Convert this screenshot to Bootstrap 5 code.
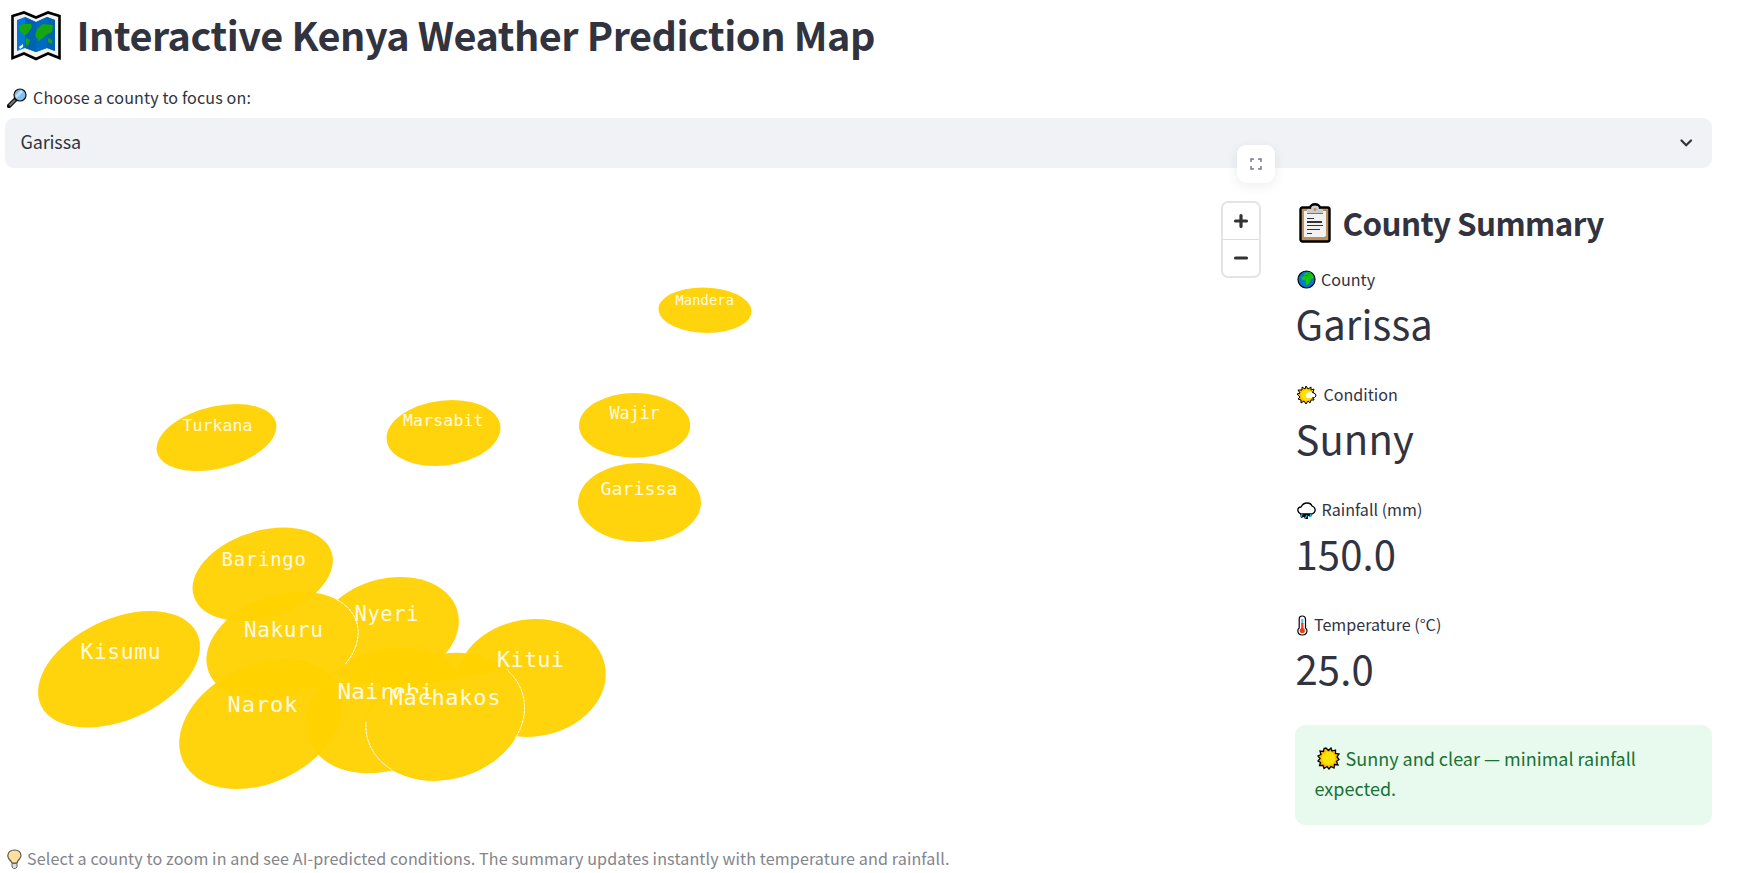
<!DOCTYPE html>
<html lang="en">
<head>
<meta charset="utf-8">
<title>Interactive Kenya Weather Prediction Map</title>
<link href="https://cdn.jsdelivr.net/npm/bootstrap@5.3.0/dist/css/bootstrap.min.css" rel="stylesheet">
<style>
body{font-family:"Noto Sans CJK JP","Noto Sans CJK SC","Open Sans",sans-serif;color:#31333f;background:#fff;overflow:hidden}
svg{flex:none;display:block}
.page{width:1706.5px;margin-left:5px}
.title{font-size:39.6px;line-height:53px;font-weight:700;letter-spacing:-.45px;margin:0;padding-top:7px;height:86px;gap:16px}
.title svg{margin:4px 0 0 5.5px}
.lbl{font-size:16.1px;line-height:22px;height:24px;white-space:nowrap}
.picker{height:50px;background:#f0f2f6;border-radius:9px;font-size:18px;letter-spacing:-.15px;line-height:47px;padding:0 18px 0 15.5px}
.map{width:1265px;height:679px}
.fs-btn{width:38px;height:38px;left:1232px;top:-23px;border-radius:9px;background:#fff;box-shadow:0 3px 12px rgba(49,51,63,.09)}
.zoomer{width:40.5px;height:77px;left:1215.5px;top:33px;border-radius:7px;border:2.3px solid #e4e4e4;background:#fff}
.zoomer div:first-child{border-bottom:1px solid #ddd}
.side{width:417px;padding-top:34px}
.side h2{font-size:31.4px;line-height:40px;font-weight:700;letter-spacing:-.6px;height:66px;margin:0;padding-top:1px}
.metric{height:115px}
.metric:nth-last-child(2){height:112px}
.val{font-size:40px;line-height:56px;letter-spacing:.12px;margin:2.6px 0 0 1px}
.note{height:100px;background:#e8f9ee;color:#177233;border-radius:10px;padding:18px 20px;font-size:18px;line-height:30.4px}
.note svg{display:inline-block;vertical-align:-4px;margin:0 2px 0 2px}
.focus-label{letter-spacing:.12px}
.foot{color:#83858c;letter-spacing:.12px}
.map text{font-family:"DejaVu Sans Mono",monospace;fill:#fff;fill-opacity:.9}
</style>
</head>
<body>
<main class="page">
<h1 class="title d-flex"><svg width="50" height="50" viewBox="0 0 50 50"><path d="M1.500 5 13 1.500 25 6.500 37 1.500 48.500 5V47L37 42.500 25 48 13 42.500 1.500 47Z" fill="#f1f1f1" stroke="#000" stroke-width="2.600"/><path d="M6 9 14 6 25 11 36 6 44 9V40L36 37 25 41 14 37 6 40Z" fill="#0078d7"/><path d="M14 6 25 11V41L14 37ZM36 6 44 9V40L36 37Z" fill="#0063b1"/><path d="M25 11 36 6V37L25 41Z" fill="#006ac0"/><path d="M8 15 12 13H20L21 16 17 22 13 25 9 20ZM15 27 19 29 17 35 15 34ZM24 25 26 18 32 13 42 14 41 21 35 24 32 27 28 30 26 27ZM37 27 41 29V33L37 31Z" fill="#16a60f"/><path d="M8 36 12 33V36L9 38Z" fill="#fff"/></svg><span>Interactive Kenya Weather Prediction Map</span></h1>
<div class="lbl focus-label d-flex"><svg width="20" height="20" viewBox="0 0 20 20" style="margin:2px 6px 0 2px"><path d="M9 11 2 18" stroke="#111" stroke-width="4.500" stroke-linecap="round"/><path d="M8 12 2.500 17.500" stroke="#777" stroke-width="2"/><circle cx="13" cy="7" r="6" fill="#83beec" stroke="#111" stroke-width="1.200"/><path d="M9 9 15 3" stroke="#c3e2fa" stroke-width="2.500"/></svg><span>Choose a county to focus on:</span></div>
<div class="picker d-flex justify-content-between align-items-start mt-2"><span>Garissa</span><svg class="align-self-center" width="16" height="16" viewBox="0 0 16 16"><path d="M3.500 5.500 8.200 10.200 13 5.500" fill="none" stroke="#31333f" stroke-width="2.300" stroke-linecap="round"/></svg></div>
<div class="d-flex justify-content-between">
<section class="map position-relative">
<svg width="1265" height="679" viewBox="5.5 168 1265 679">
<defs><circle id="nakuru" r="1" transform="matrix(73.5 0 -18.9 54.3 282.8 646)"/><circle id="nyeri" r="1" transform="matrix(70.2 0 -12.8 53.7 388 630.7)"/><circle id="machakos" r="1" transform="matrix(78.5 0 -11.3 64 445.7 716.7)"/>
<clipPath id="c1"><use href="#nyeri"/></clipPath><clipPath id="c2"><path d="M360 728 375 705 400 690 455 679 530 665V790H360Z"/></clipPath><clipPath id="c3"><path d="M337 597H365V664H337ZM507 668H530V738H507ZM360 722H392V772H360Z"/></clipPath><clipPath id="c4"><path d="M330 670H440V702H424V693H402L391 704H330Z"/></clipPath></defs>
<g fill="#ffd200" fill-opacity=".95">
<circle r="1" transform="matrix(74.6 0 -31.500 58.200 119.500 669.300)"/>
<circle r="1" transform="matrix(67 0 -20.800 46.800 263.200 574.300)"/>
<circle r="1" transform="matrix(56.700 0 -19.500 33.500 217 437.500)"/>
<circle r="1" transform="matrix(56.300 0 -8.700 33 444 433)"/>
<circle r="1" transform="matrix(46.500 0 2.200 22.800 705.500 310.200)"/>
<circle r="1" transform="matrix(55.600 0 0 32.300 635.100 425.400)"/>
<circle r="1" transform="matrix(61.500 0 0 39.500 640 502.500)"/>
<use href="#nyeri"/><use href="#nakuru"/>
<g clip-path="url(#c1)"><use href="#nakuru" fill="#ffd40d" fill-opacity="1"/></g>
<circle r="1" transform="matrix(78.200 0 -24 64.900 261.500 724.200)"/>
<circle r="1" transform="matrix(77.700 0 -17 63 385.800 710.300)"/>
<circle r="1" transform="matrix(74.400 0 -5 59 531.700 678)"/>
<use href="#machakos"/></g>
<g clip-path="url(#c2)"><use href="#machakos" fill="#ffd40d"/></g>
<g clip-path="url(#c4)"><text x="338" y="698.700" font-size="22" textLength="96" lengthAdjust="spacingAndGlyphs">Nairobi</text></g>
<g clip-path="url(#c3)" fill="none" stroke="#fff" stroke-dasharray="3 .7"><ellipse rx="1" ry="1" transform="matrix(73.5 0 -18.9 54.3 282.8 646)" vector-effect="non-scaling-stroke"/><ellipse rx="1" ry="1" transform="matrix(78.5 0 -11.3 64 445.7 716.7)" vector-effect="non-scaling-stroke"/></g>
<text x="81" y="659" font-size="21.300" textLength="80">Kisumu</text>
<text x="244.500" y="636.700" font-size="21" textLength="79">Nakuru</text>
<text x="228" y="712.300" font-size="22" textLength="70">Narok</text>
<text x="355" y="620.700" font-size="20.500" textLength="64">Nyeri</text>
<text x="390" y="705" font-size="22" textLength="111">Machakos</text>
<text x="497.500" y="667.300" font-size="22" textLength="67">Kitui</text>
<text x="222" y="565.700" font-size="19" textLength="84.500">Baringo</text>
<text x="183" y="430.700" font-size="16.500" textLength="70">Turkana</text>
<text x="403.500" y="426" font-size="16.500" textLength="80.500">Marsabit</text>
<text x="676" y="305" font-size="13.800" textLength="58.500">Mandera</text>
<text x="610" y="419" font-size="16.800" textLength="50">Wajir</text>
<text x="601" y="495" font-size="18.200" textLength="77">Garissa</text>
</svg>
<div class="fs-btn position-absolute d-flex align-items-center justify-content-center"><svg width="12" height="12" viewBox="0 0 12 12"><path d="M1 4V1H4M8 1H11V4M11 8V11H8M4 11H1V8" fill="none" stroke="#777983" stroke-width="1.500"/></svg></div>
<div class="zoomer position-absolute d-flex flex-column"><div class="flex-fill d-flex align-items-center justify-content-center"><svg width="16" height="16" viewBox="0 0 16 16"><path d="M8 2.500V13.500M2.500 8H13.500" stroke="#333" stroke-width="3.200" stroke-linecap="round"/></svg></div><div class="flex-fill d-flex align-items-center justify-content-center"><svg width="16" height="16" viewBox="0 0 16 16"><path d="M2.500 8H13.500" stroke="#333" stroke-width="3.200" stroke-linecap="round"/></svg></div></div>
</section>
<aside class="side">
<h2 class="d-flex"><svg width="32" height="40" viewBox="0 0 32 40" style="margin:0 12px 0 4px"><rect x="1.500" y="4.500" width="29" height="34" rx="2" fill="#ba8f63" stroke="#000" stroke-width="2.400"/><path d="M11 5Q12 1.300 16 1.300T21 5" fill="#ccc" stroke="#000" stroke-width="2.400"/><path d="M5 8H27V33L25 34H5Z" fill="#f2f2f2"/><path d="M8 6H12L13 3H19L20 6H24V10H8Z" fill="#ccc"/><path d="M8 10.500H24" stroke="#777"/><circle cx="16" cy="6.500" r="1.400" fill="#ba8f63"/><path d="M8 15.500H15M8 22.500H24M8 26.500H21M8 30.500H13" stroke="#333" stroke-width="1"/><path d="M8 19H23" stroke="#333" stroke-width="2"/></svg><span>County Summary</span></h2>
<div class="metric"><div class="lbl d-flex"><svg width="19" height="19" viewBox="0 0 19 19" style="margin:2px 5px 0 2.500px"><circle cx="9.500" cy="9.500" r="8.500" fill="#0078d7" stroke="#000" stroke-width="1.200"/><path d="M8 3 13 2 16 5 17 8 14 9 13 12 10.500 15H9L8.500 10.500 5 10 4.500 7 7 6Z" fill="#16c60c"/><path d="M8 5.500H11M11 3.500H13" stroke="#0078d7"/></svg><span>County</span></div><div class="val">Garissa</div></div>
<div class="metric"><div class="lbl d-flex"><svg width="20" height="20" viewBox="0 0 20 20" style="margin:1.500px 6.500px 0 2.500px"><path d="M9 1 11 4 14 2 14 5 17 4 16 7 18 10 16 12 17 15 14 15 13 18 11 16 9 19 7 16 4 18 4 15 1 14 3 12 0 9 3 8 1 5 5 5 5 2 8 4Z" fill="#ffb900" stroke="#000"/><circle cx="9.500" cy="10" r="5.500" fill="#fde300"/><path d="M10 13Q7 10 11 8Q13 5 16 8Q20 9 19 11Q18 14 15 13Z" fill="#fff"/><path d="M15 7Q20 9 19 11Q18 13 15 13" fill="none" stroke="#000"/></svg><span>Condition</span></div><div class="val">Sunny</div></div>
<div class="metric"><div class="lbl d-flex"><svg width="19" height="19" viewBox="0 0 19 19" style="margin:4px 5.500px 0 2.500px"><path d="M4 12Q1 11 .8 8Q1 5 4 5Q6 1 10 1Q14 1 15 4Q18 5 18.200 8Q18 11 15 12Z" fill="#fff" stroke="#000" stroke-width="1.300"/><path d="M3 12H15L14 15 11 14 11 17 8 17 7 15 4 16Z" fill="#000"/><path d="M5 12 4 15M10 13 8 16.500M14 12 13 15" stroke="#00b7f0" stroke-width="1.500"/></svg><span>Rainfall (mm)</span></div><div class="val">150.0</div></div>
<div class="metric"><div class="lbl d-flex"><svg width="11" height="21" viewBox="0 0 11 21" style="margin:1.500px 6.500px 0 2px"><path d="M2.200 13V4Q2.200 1 5.300 1T8.500 4V13Q10 14 10 16Q9.500 20 5.300 20T.8 16Q.8 14 2.200 13Z" fill="#fff" stroke="#000" stroke-width="1.200"/><path d="M5.300 4V9" stroke="#4cc8f0" stroke-width="2.200"/><path d="M5.300 8V15" stroke="#f03a17" stroke-width="2.200"/><circle cx="5.300" cy="15.500" r="2.600" fill="#f03a17"/></svg><span>Temperature (°C)</span></div><div class="val">25.0</div></div>
<div class="note"><svg width="23" height="23" viewBox="0 0 23 23"><path d="M9 1 11.500 3.500 14 1 15 4 18.500 3 18.500 6.500 22 7 20 10 22 12.500 19.500 14.500 21 18 17.500 17.500 17 21 14 19.500 12 22 10 19.500 7 21.500 6 18.500 2.500 18.500 3.500 15.500 1 14 3 11.500 1 9 4 7.500 3 4 6.500 4.500 7 1.500Z" fill="#ffb900" stroke="#000" stroke-width="1.300"/><circle cx="11.500" cy="11.300" r="6.700" fill="#fde300"/></svg> Sunny and clear — minimal rainfall expected.</div>
</aside>
</div>
<div class="lbl foot d-flex"><svg width="15" height="21" viewBox="0 0 15 21" style="margin:1.500px 5.500px 0 1.500px"><path d="M5 14Q4 12 2 10Q.7 8 .8 6.500Q1.500 1 7.500 1T14 6.500Q14 8 12.500 10Q10.500 12 10 14Z" fill="#ffe09a" stroke="#555" stroke-width="1.200"/><path d="M5 14.500H10V18L8.500 19.500H6.500L5 18Z" fill="#ddd" stroke="#666"/></svg><span>Select a county to zoom in and see AI-predicted conditions. The summary updates instantly with temperature and rainfall.</span></div>
</main>
<script src="https://cdn.jsdelivr.net/npm/bootstrap@5.3.0/dist/js/bootstrap.bundle.min.js"></script>
</body>
</html>
